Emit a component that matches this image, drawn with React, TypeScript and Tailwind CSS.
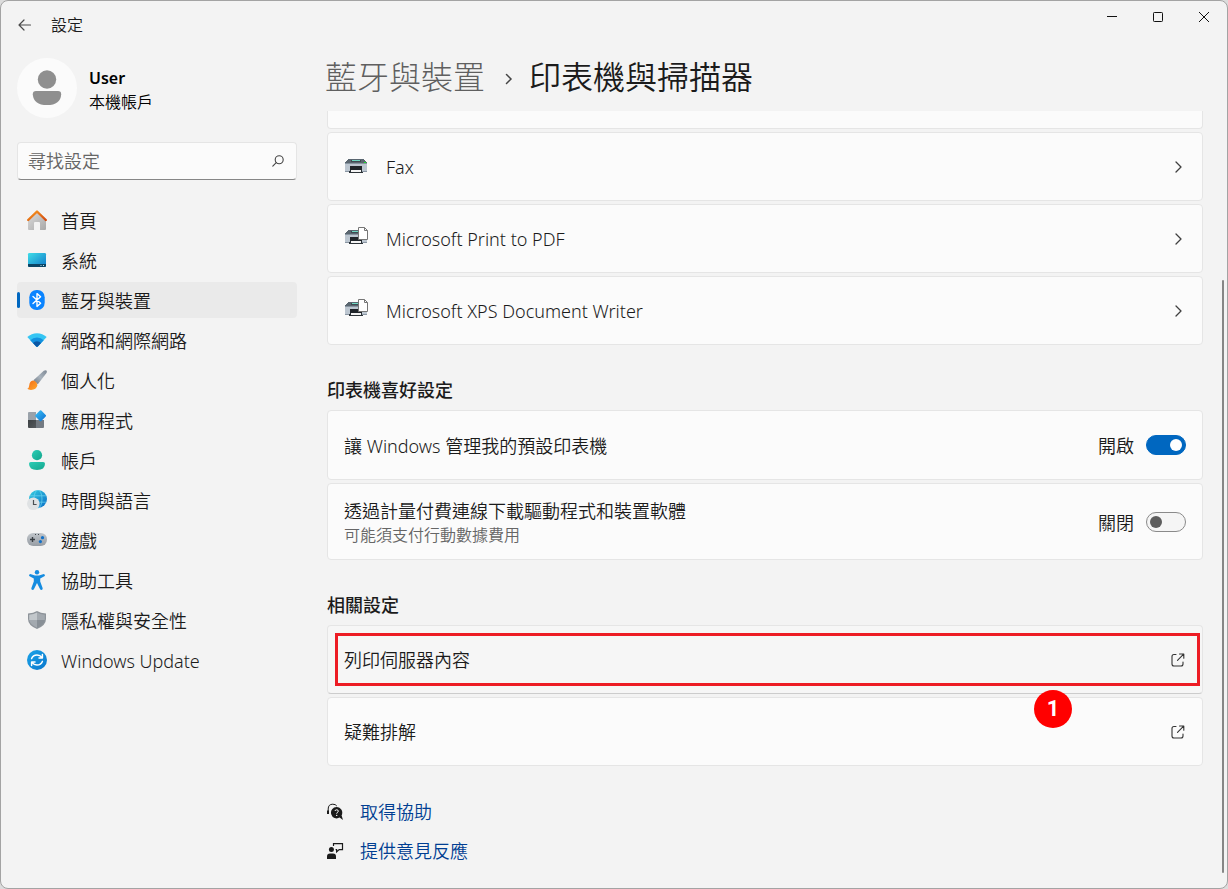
import { useState, type ReactNode } from "react";

function BackIcon() {
  return (
    <svg width="14" height="12" viewBox="0 0 14 12" fill="none" stroke="#4a4a4a" strokeWidth="1.2" strokeLinecap="round" strokeLinejoin="round">
      <path d="M6 1 L1 6 L6 11 M1 6 H12.5" />
    </svg>
  );
}

function HomeIcon() {
  return (
    <svg width="20" height="20" viewBox="0 0 20 20">
      <defs>
        <linearGradient id="homeWall" x1="0" y1="0" x2="1" y2="1">
          <stop offset="0" stopColor="#dcdcdc" />
          <stop offset="1" stopColor="#a8a8a8" />
        </linearGradient>
        <linearGradient id="homeRoof" x1="0" y1="0" x2="1" y2="1">
          <stop offset="0" stopColor="#fb9a1c" />
          <stop offset="1" stopColor="#d14a12" />
        </linearGradient>
      </defs>
      <path d="M10 2 L19 10 V19 Q19 20 18 20 H13 V13 Q13 12 12 12 H8 Q7 12 7 13 V20 H2 Q1 20 1 19 V10 Z" fill="url(#homeWall)" />
      <path d="M1.2 10 L10 1.5 L18.8 10" fill="none" stroke="url(#homeRoof)" strokeWidth="2.4" strokeLinecap="round" strokeLinejoin="round" />
    </svg>
  );
}

function SystemIcon() {
  return (
    <svg width="20" height="20" viewBox="0 0 20 20">
      <defs>
        <linearGradient id="sysScreen" x1="0" y1="0" x2="1" y2="1">
          <stop offset="0" stopColor="#3fdde8" />
          <stop offset="1" stopColor="#0f78c8" />
        </linearGradient>
      </defs>
      <rect x="1" y="3" width="18" height="14" rx="1.2" fill="url(#sysScreen)" />
      <path d="M1 14 H19 V15.8 Q19 17 17.8 17 H2.2 Q1 17 1 15.8 Z" fill="#0b4464" />
      <rect x="13.5" y="15" width="1" height="1" fill="#b9e6f5" />
      <rect x="16" y="15" width="1" height="1" fill="#b9e6f5" />
    </svg>
  );
}

function BluetoothIcon() {
  return (
    <svg width="20" height="20" viewBox="0 0 20 20">
      <rect x="2.3" y="0" width="15.4" height="20" rx="7.2" fill="#0a84ff" />
      <path d="M6 6.4 L13.6 13.2 L10 16.4 V3.6 L13.6 6.8 L6 13.6" fill="none" stroke="#fff" strokeWidth="1.4" strokeLinejoin="round" strokeLinecap="round" />
    </svg>
  );
}

function NetworkIcon() {
  return (
    <svg width="20" height="20" viewBox="0 0 20 20">
      <path d="M0.3 7 Q4.5 3.2 10 3.2 Q15.5 3.2 19.7 7 L10.8 16.4 Q10 17.2 9.2 16.4 Z" fill="#35c5f3" />
      <path d="M3.3 10.2 Q6 7.4 10 7.4 Q14 7.4 16.7 10.2 L10.8 16.4 Q10 17.2 9.2 16.4 Z" fill="#1390df" />
      <path d="M6 13 Q7.6 11.2 10 11.2 Q12.4 11.2 14 13 L10.8 16.4 Q10 17.2 9.2 16.4 Z" fill="#0b57a4" />
    </svg>
  );
}

function BrushIcon() {
  return (
    <svg width="20" height="20" viewBox="0 0 20 20">
      <defs>
        <linearGradient id="brushHandle" x1="1" y1="0" x2="0" y2="1">
          <stop offset="0" stopColor="#7d8894" />
          <stop offset="0.5" stopColor="#a9b3bd" />
          <stop offset="1" stopColor="#6b7580" />
        </linearGradient>
        <linearGradient id="brushTip" x1="0" y1="0" x2="1" y2="1">
          <stop offset="0" stopColor="#f36c17" />
          <stop offset="1" stopColor="#ffa92c" />
        </linearGradient>
      </defs>
      <path d="M16.8 0.8 Q18.3 -0.3 19.4 0.6 Q20.4 1.7 19.3 3.2 L10.8 14.3 L6.4 10.2 Z" fill="url(#brushHandle)" />
      <path d="M6 10.6 Q9.8 11.4 10.4 15.2 Q9.4 19.8 4 19.9 Q1.4 19.9 0.3 18.8 Q2 18.3 2.2 15.6 Q2.6 11.2 6 10.6 Z" fill="url(#brushTip)" />
    </svg>
  );
}

function AppsIcon() {
  return (
    <svg width="20" height="20" viewBox="0 0 20 20">
      <defs>
        <linearGradient id="appDiamond" x1="0" y1="0" x2="1" y2="1">
          <stop offset="0" stopColor="#3dc3f7" />
          <stop offset="1" stopColor="#0a6ed1" />
        </linearGradient>
        <linearGradient id="appDark" x1="0" y1="0" x2="1" y2="1">
          <stop offset="0" stopColor="#3c4043" />
          <stop offset="1" stopColor="#55595d" />
        </linearGradient>
      </defs>
      <path d="M2 2 H9 V10 H1 V3 Q1 2 2 2 Z" fill="#9aa2aa" />
      <path d="M1 10 H9 V18 H2 Q1 18 1 17 Z" fill="url(#appDark)" />
      <path d="M9 10 H17 V17 Q17 18 16 18 H9 Z" fill="#737a82" />
      <path d="M12.9 0.5 Q13.6 -0.2 14.3 0.5 L18.7 5 Q19.4 5.7 18.7 6.4 L14.3 10.9 Q13.6 11.6 12.9 10.9 L8.5 6.4 Q7.8 5.7 8.5 5 Z" fill="url(#appDiamond)" />
    </svg>
  );
}

function AccountIcon() {
  return (
    <svg width="20" height="20" viewBox="0 0 20 20">
      <defs>
        <linearGradient id="acct" x1="0" y1="0" x2="1" y2="1">
          <stop offset="0" stopColor="#2ccdb6" />
          <stop offset="1" stopColor="#13a58c" />
        </linearGradient>
      </defs>
      <circle cx="10" cy="5.2" r="5.1" fill="url(#acct)" />
      <path d="M3.8 12 H16.2 Q18 12 18 13.8 Q18 20 10 20 Q2 20 2 13.8 Q2 12 3.8 12 Z" fill="url(#acct)" />
    </svg>
  );
}

function TimeIcon() {
  return (
    <svg width="20" height="20" viewBox="0 0 20 20">
      <defs>
        <linearGradient id="globe" x1="0" y1="0" x2="1" y2="1">
          <stop offset="0" stopColor="#34cfe0" />
          <stop offset="1" stopColor="#0b6cc7" />
        </linearGradient>
      </defs>
      <circle cx="11" cy="9" r="9" fill="url(#globe)" />
      <g fill="none" stroke="#6fd6f0" strokeWidth="0.7">
        <ellipse cx="11" cy="9" rx="4" ry="9" />
        <path d="M3 5.8 H19 M3 12.2 H19" />
      </g>
      <circle cx="6.3" cy="13.7" r="6.3" fill="#dfe2e4" />
      <path d="M6.5 10 V14.5 H9.6" fill="none" stroke="#4b4f53" strokeWidth="1.2" />
    </svg>
  );
}

function GameIcon() {
  return (
    <svg width="20" height="20" viewBox="0 0 20 20">
      <defs>
        <linearGradient id="pad" x1="0" y1="0" x2="0" y2="1">
          <stop offset="0" stopColor="#c0c5ca" />
          <stop offset="1" stopColor="#979da4" />
        </linearGradient>
      </defs>
      <rect x="0" y="3" width="20" height="13" rx="6.2" fill="url(#pad)" />
      <path d="M5.5 7 V12 M3 9.5 H8" stroke="#3a3f44" strokeWidth="1.4" />
      <circle cx="15.5" cy="7.7" r="1.6" fill="#1170c9" />
      <circle cx="13.4" cy="11.6" r="1.6" fill="#1170c9" />
      <rect x="8" y="4" width="1" height="1" fill="#44494e" />
      <rect x="11" y="4" width="1" height="1" fill="#44494e" />
    </svg>
  );
}

function AccessIcon() {
  return (
    <svg width="20" height="20" viewBox="0 0 20 20" fill="#158ce0">
      <circle cx="10" cy="2.2" r="2.2" />
      <path d="M2.4 4.4 Q1.5 5.4 2.6 6.3 L6.8 8.4 V11.6 L4.3 18.2 Q4.2 19.8 5.6 20 Q6.6 20 7 19.1 L10 13 L13 19.1 Q13.4 20 14.4 20 Q15.8 19.8 15.7 18.2 L13.2 11.6 V8.4 L17.4 6.3 Q18.5 5.4 17.6 4.4 Q16.9 3.8 16 4.2 L12 5.6 H8 L4 4.2 Q3.1 3.8 2.4 4.4 Z" />
    </svg>
  );
}

function ShieldIcon() {
  return (
    <svg width="20" height="20" viewBox="0 0 20 20">
      <path d="M10 1 Q13.5 3.2 19 3.6 V9 Q19 15.4 10 19 Q1 15.4 1 9 V3.6 Q6.5 3.2 10 1 Z" fill="#8e949a" />
      <path d="M10 2.4 Q6.8 4.3 2.2 4.7 V10 H10 Z" fill="#c2c7cb" />
      <path d="M10 2.4 Q13.2 4.3 17.8 4.7 V10 H10 Z" fill="#a3a9af" />
      <path d="M10 10 H2.3 Q2.9 14.6 10 17.8 Z" fill="#a3a9af" />
      <path d="M10 10 H17.7 Q17.1 14.6 10 17.8 Z" fill="#888f96" />
    </svg>
  );
}

function UpdateIcon() {
  return (
    <svg width="20" height="20" viewBox="0 0 20 20">
      <defs>
        <linearGradient id="upd" x1="0" y1="0" x2="1" y2="1">
          <stop offset="0" stopColor="#1ba4e8" />
          <stop offset="1" stopColor="#0a76cc" />
        </linearGradient>
      </defs>
      <circle cx="10" cy="10" r="10" fill="url(#upd)" />
      <g fill="none" stroke="#fff" strokeWidth="1.5" strokeLinecap="round" strokeLinejoin="round">
        <path d="M4.6 8.6 Q6 5 10 5 Q13.2 5 15 7.6 M15.4 4.6 V8 H12" />
        <path d="M15.4 11.4 Q14 15 10 15 Q6.8 15 5 12.4 M4.6 15.4 V12 H8" />
      </g>
    </svg>
  );
}

function PrinterIcon({ page = false }: { page?: boolean }) {
  return (
    <svg width="24" height="24" viewBox="0 0 24 24" shapeRendering="crispEdges">
      <g transform={page ? "translate(0 -1)" : undefined}>
        <path d="M4 4 H20 L23 8 V9 H1 V8 Z" fill="#5a6670" />
        <rect x="7" y="5" width="10" height="2" fill="#3f4a52" />
        <rect x="8" y="5" width="8" height="1" fill="#6fd8c2" />
        <rect x="1" y="8" width="22" height="9" fill="#bcc6d0" />
        <rect x="1" y="8" width="22" height="1" fill="#8794a0" />
        <rect x="1" y="16" width="22" height="1" fill="#8a96a3" />
        <rect x="6" y="11" width="12" height="4" fill="#20252a" />
        <path d="M6 15 H18 L19 18 H5 Z" fill="#2d3338" />
        <rect x="7" y="15" width="10" height="2" fill="#f4f4f4" />
      </g>
      {page ? (
        <g shapeRendering="auto">
          <path d="M14.5 0.5 H20.5 L23.5 3.5 V12.5 H14.5 Z" fill="#fff" stroke="#767676" />
          <path d="M20.5 0.5 V3.5 H23.5" fill="none" stroke="#767676" />
        </g>
      ) : (
        <rect x="20" y="7" width="2" height="1" fill="#19e02a" />
      )}
    </svg>
  );
}

function ChevronIcon() {
  return (
    <svg width="8" height="12" viewBox="0 0 8 12" fill="none" stroke="#3f3f3f" strokeWidth="1.3" strokeLinecap="round" strokeLinejoin="round">
      <path d="M2 1 L7 6 L2 11" />
    </svg>
  );
}

function OpenIcon() {
  return (
    <svg width="16" height="14" viewBox="0 0 16 14" fill="none" stroke="#333" strokeWidth="1.1" strokeLinecap="round" strokeLinejoin="round">
      <path d="M6 1.5 H4 Q2 1.5 2 3.5 V11 Q2 13 4 13 H11 Q13 13 13 11 V9" />
      <path d="M9.5 1 H13.8 V5.3 M13.6 1.2 L7.5 7.3" />
    </svg>
  );
}

function HelpIcon() {
  return (
    <svg width="17" height="18" viewBox="0 0 17 18">
      <path d="M1.2 9.5 V6 Q1.2 1.2 5.8 1.2 Q8.6 1.2 9.8 3" fill="none" stroke="#1b1b1b" strokeWidth="1" />
      <path d="M0 7.5 H2 V11 H0 Z" fill="#1b1b1b" />
      <path d="M9.6 4 A5.7 5.7 0 1 0 12.6 14.6 L16 17 L14.6 12.4 A5.7 5.7 0 0 0 9.6 4 Z" fill="#1b1b1b" />
      <path d="M8 8 Q8.1 6.8 9.7 6.8 Q11.3 6.8 11.3 8.1 Q11.3 9 10.3 9.5 Q9.7 9.9 9.7 10.7" fill="none" stroke="#fff" strokeWidth="1" />
      <circle cx="9.7" cy="12.4" r="0.7" fill="#fff" />
    </svg>
  );
}

function FeedbackIcon() {
  return (
    <svg width="17" height="18" viewBox="0 0 17 18">
      <circle cx="4.4" cy="7.6" r="2.5" fill="#1b1b1b" />
      <path d="M0 17 V14.5 Q0 11.6 3 11.6 H6 Q9 11.6 9 14.5 V17 Z" fill="#1b1b1b" />
      <path d="M6.5 4 V1.6 H15.5 V7.6 H12.2 L9.6 10 V7.6 H8.6" fill="none" stroke="#1b1b1b" strokeWidth="1.2" />
    </svg>
  );
}

const navItems: { label: string; icon: ReactNode }[] = [
  { label: "首頁", icon: <HomeIcon /> },
  { label: "系統", icon: <SystemIcon /> },
  { label: "藍牙與裝置", icon: <BluetoothIcon /> },
  { label: "網路和網際網路", icon: <NetworkIcon /> },
  { label: "個人化", icon: <BrushIcon /> },
  { label: "應用程式", icon: <AppsIcon /> },
  { label: "帳戶", icon: <AccountIcon /> },
  { label: "時間與語言", icon: <TimeIcon /> },
  { label: "遊戲", icon: <GameIcon /> },
  { label: "協助工具", icon: <AccessIcon /> },
  { label: "隱私權與安全性", icon: <ShieldIcon /> },
  { label: "Windows Update", icon: <UpdateIcon /> },
];

const printers = [
  { name: "Fax", page: false },
  { name: "Microsoft Print to PDF", page: true },
  { name: "Microsoft XPS Document Writer", page: true },
];

function TitleBar() {
  return (
    <header className="flex h-12 shrink-0 items-start justify-between">
      <div className="flex h-12 items-center gap-[18px] pl-4">
        <button type="button" aria-label="上一頁" className="flex h-6 w-4 items-center justify-center">
          <BackIcon />
        </button>
        <span className="text-base leading-6">設定</span>
      </div>
      <div className="flex">
        <button type="button" aria-label="最小化" className="flex h-8 w-[46px] items-center justify-center">
          <svg width="10" height="10" viewBox="0 0 10 10" stroke="#111">
            <path d="M0 4.5 H10" />
          </svg>
        </button>
        <button type="button" aria-label="最大化" className="flex h-8 w-[46px] items-center justify-center">
          <svg width="10" height="10" viewBox="0 0 10 10" fill="none" stroke="#111">
            <rect x="0.5" y="0.5" width="9" height="9" rx="0.8" />
          </svg>
        </button>
        <button type="button" aria-label="關閉視窗" className="flex h-8 w-[46px] items-center justify-center">
          <svg width="10" height="10" viewBox="0 0 10 10" stroke="#111">
            <path d="M0 0 L10 10 M10 0 L0 10" />
          </svg>
        </button>
      </div>
    </header>
  );
}

function Sidebar() {
  return (
    <aside className="flex w-[280px] shrink-0 flex-col pt-[9px]">
      <div className="flex items-center gap-3">
        <div className="flex size-[60px] items-center justify-center rounded-full bg-[#fbfbfb]">
          <svg width="30" height="36" viewBox="0 0 30 36" fill="#8f8f8f">
            <circle cx="15" cy="9.5" r="9.2" />
            <path d="M4 21 H26 Q29.2 21 29.2 24.2 Q28.6 35 15 35 Q1.4 35 0.8 24.2 Q0.8 21 4 21 Z" />
          </svg>
        </div>
        <div className="flex flex-col pt-1">
          <span className="text-base leading-6 font-semibold text-black">User</span>
          <span className="text-base leading-6 text-black">本機帳戶</span>
        </div>
      </div>

      <label className="mt-6 flex h-[38px] items-center rounded border border-b-[#868686] border-[#e5e5e5] bg-[#fbfbfb] pr-3 pl-[10px]">
        <input type="search" aria-label="尋找設定" placeholder="尋找設定" className="min-w-0 flex-1 bg-transparent text-lg leading-6 outline-none placeholder:text-[#666]" />
        <svg width="12" height="12" viewBox="0 0 12 12" fill="none" stroke="#444" strokeWidth="1.1" strokeLinecap="round">
          <circle cx="7.2" cy="4.7" r="4" />
          <path d="M4.2 7.6 L0.8 11.2" />
        </svg>
      </label>

      <nav className="mt-[22px] flex flex-col gap-1">
        {navItems.map((item, i) => (
          <a
            key={item.label}
            href="#"
            aria-current={i === 2 ? "page" : undefined}
            className={i === 2 ? "flex h-9 items-center rounded bg-[#eaeaea]" : "flex h-9 items-center rounded"}
          >
            <span className={i === 2 ? "h-4 w-[3px] rounded-full bg-[#0067c0]" : "h-4 w-[3px]"} />
            <span className="ml-[7px] size-5">{item.icon}</span>
            <span className="ml-[14px] pt-0.5 text-lg leading-6">{item.label}</span>
          </a>
        ))}
      </nav>
    </aside>
  );
}

function Toggle({ id, checked, onChange }: { id: string; checked: boolean; onChange: (v: boolean) => void }) {
  return (
    <div className="flex items-center gap-3">
      <span className="pt-0.5 text-lg leading-6">{checked ? "開啟" : "關閉"}</span>
      <input
        id={id}
        type="checkbox"
        role="switch"
        checked={checked}
        onChange={(e) => onChange(e.target.checked)}
        className="flex h-5 w-10 appearance-none items-center rounded-full border border-[#8a8a8a] bg-[#f5f5f5] px-[3px] before:size-3 before:rounded-full before:bg-[#5d5d5d] checked:justify-end checked:border-[#0067c0] checked:bg-[#0067c0] checked:before:bg-white"
      />
    </div>
  );
}

function SectionTitle({ children }: { children: ReactNode }) {
  return <h2 className="text-lg leading-6 font-medium">{children}</h2>;
}

export default function App() {
  const [manage, setManage] = useState(true);
  const [metered, setMetered] = useState(false);

  return (
    <div className="h-screen bg-[#dcdcdc] font-['Noto_Sans','Noto_Sans_CJK_TC',sans-serif] font-[350] text-[#1b1b1b]">
      <div className="flex h-full flex-col overflow-hidden rounded-lg border border-[#a3a3a3] bg-[#f3f3f3]">
        <TitleBar />
        <div className="flex min-h-0 flex-1 pl-4">
          <Sidebar />
          <main className="flex min-w-0 flex-1 flex-col">
            <h1 className="flex h-[62px] shrink-0 items-center pb-1.5 pl-7 text-[32px] leading-10">
              <a href="#" className="font-light text-[#5f5f5f]">藍牙與裝置</a>
              <svg className="mt-1 mr-4 ml-5" width="8" height="12" viewBox="0 0 8 12" fill="none" stroke="#444" strokeWidth="1.5" strokeLinecap="round">
                <path d="M1.5 1.5 L6 6 L1.5 10.5" />
              </svg>
              <span>印表機與掃描器</span>
            </h1>

            <div className="relative min-h-0 flex-1 overflow-hidden pr-6 pl-[30px]">
              <div className="flex flex-col gap-[3px]">
                <div className="h-[18px] rounded-b border border-t-0 border-[#e5e5e5] bg-[#fbfbfb]" />
                {printers.map((p) => (
                  <button key={p.name} type="button" className="flex h-[69px] items-center rounded border border-[#e5e5e5] bg-[#fbfbfb] pr-5 pl-4 text-left">
                    <PrinterIcon page={p.page} />
                    <span className="ml-[18px] flex-1 text-lg leading-6">{p.name}</span>
                    <ChevronIcon />
                  </button>
                ))}
              </div>

              <section className="mt-[33px] flex flex-col gap-[3px]">
                <div className="pb-[5px]">
                  <SectionTitle>印表機喜好設定</SectionTitle>
                </div>
                <div className="flex h-[70px] items-center justify-between rounded border border-[#e5e5e5] bg-[#fbfbfb] px-4">
                  <label htmlFor="manage-default" className="pt-0.5 text-lg leading-6">讓 Windows 管理我的預設印表機</label>
                  <Toggle id="manage-default" checked={manage} onChange={setManage} />
                </div>
                <div className="flex h-[77px] items-center justify-between rounded border border-[#e5e5e5] bg-[#fbfbfb] px-4">
                  <label htmlFor="metered" className="flex flex-col pt-0.5">
                    <span className="text-lg leading-6">透過計量付費連線下載驅動程式和裝置軟體</span>
                    <span className="text-base leading-6 text-[#666]">可能須支付行動數據費用</span>
                  </label>
                  <Toggle id="metered" checked={metered} onChange={setMetered} />
                </div>
              </section>

              <section className="mt-[33px] flex flex-col gap-[3px]">
                <div className="pb-[5px]">
                  <SectionTitle>相關設定</SectionTitle>
                </div>
                <div className="relative">
                  <button type="button" className="flex h-[69px] w-full items-center justify-between rounded border border-b-[#cccccc] border-[#e5e5e5] bg-[#f6f6f6] px-4 text-lg leading-6">
                    列印伺服器內容
                    <OpenIcon />
                  </button>
                  <div className="pointer-events-none absolute inset-y-2 right-[3px] left-2 border-[3px] border-[#ed1c24]" />
                  <span className="absolute right-[131px] -bottom-[34px] flex size-[38px] items-center justify-center rounded-full bg-[#ff0000] font-[Roboto,sans-serif] text-[22px] leading-none font-bold text-white">1</span>
                </div>
                <button type="button" className="flex h-[69px] items-center justify-between rounded border border-[#e5e5e5] bg-[#fbfbfb] px-4 text-lg leading-6">
                  疑難排解
                  <OpenIcon />
                </button>
              </section>

              <div className="mt-[34px] flex flex-col items-start gap-[15px] text-lg leading-6 text-[#003e92]">
                <a href="#" className="flex items-center gap-4">
                  <HelpIcon />
                  取得協助
                </a>
                <a href="#" className="flex items-center gap-4">
                  <FeedbackIcon />
                  提供意見反應
                </a>
              </div>

              <div className="absolute top-[169px] right-[3px] bottom-[15px] w-[2px] rounded-full bg-[#868686]" />
            </div>
          </main>
        </div>
      </div>
    </div>
  );
}
